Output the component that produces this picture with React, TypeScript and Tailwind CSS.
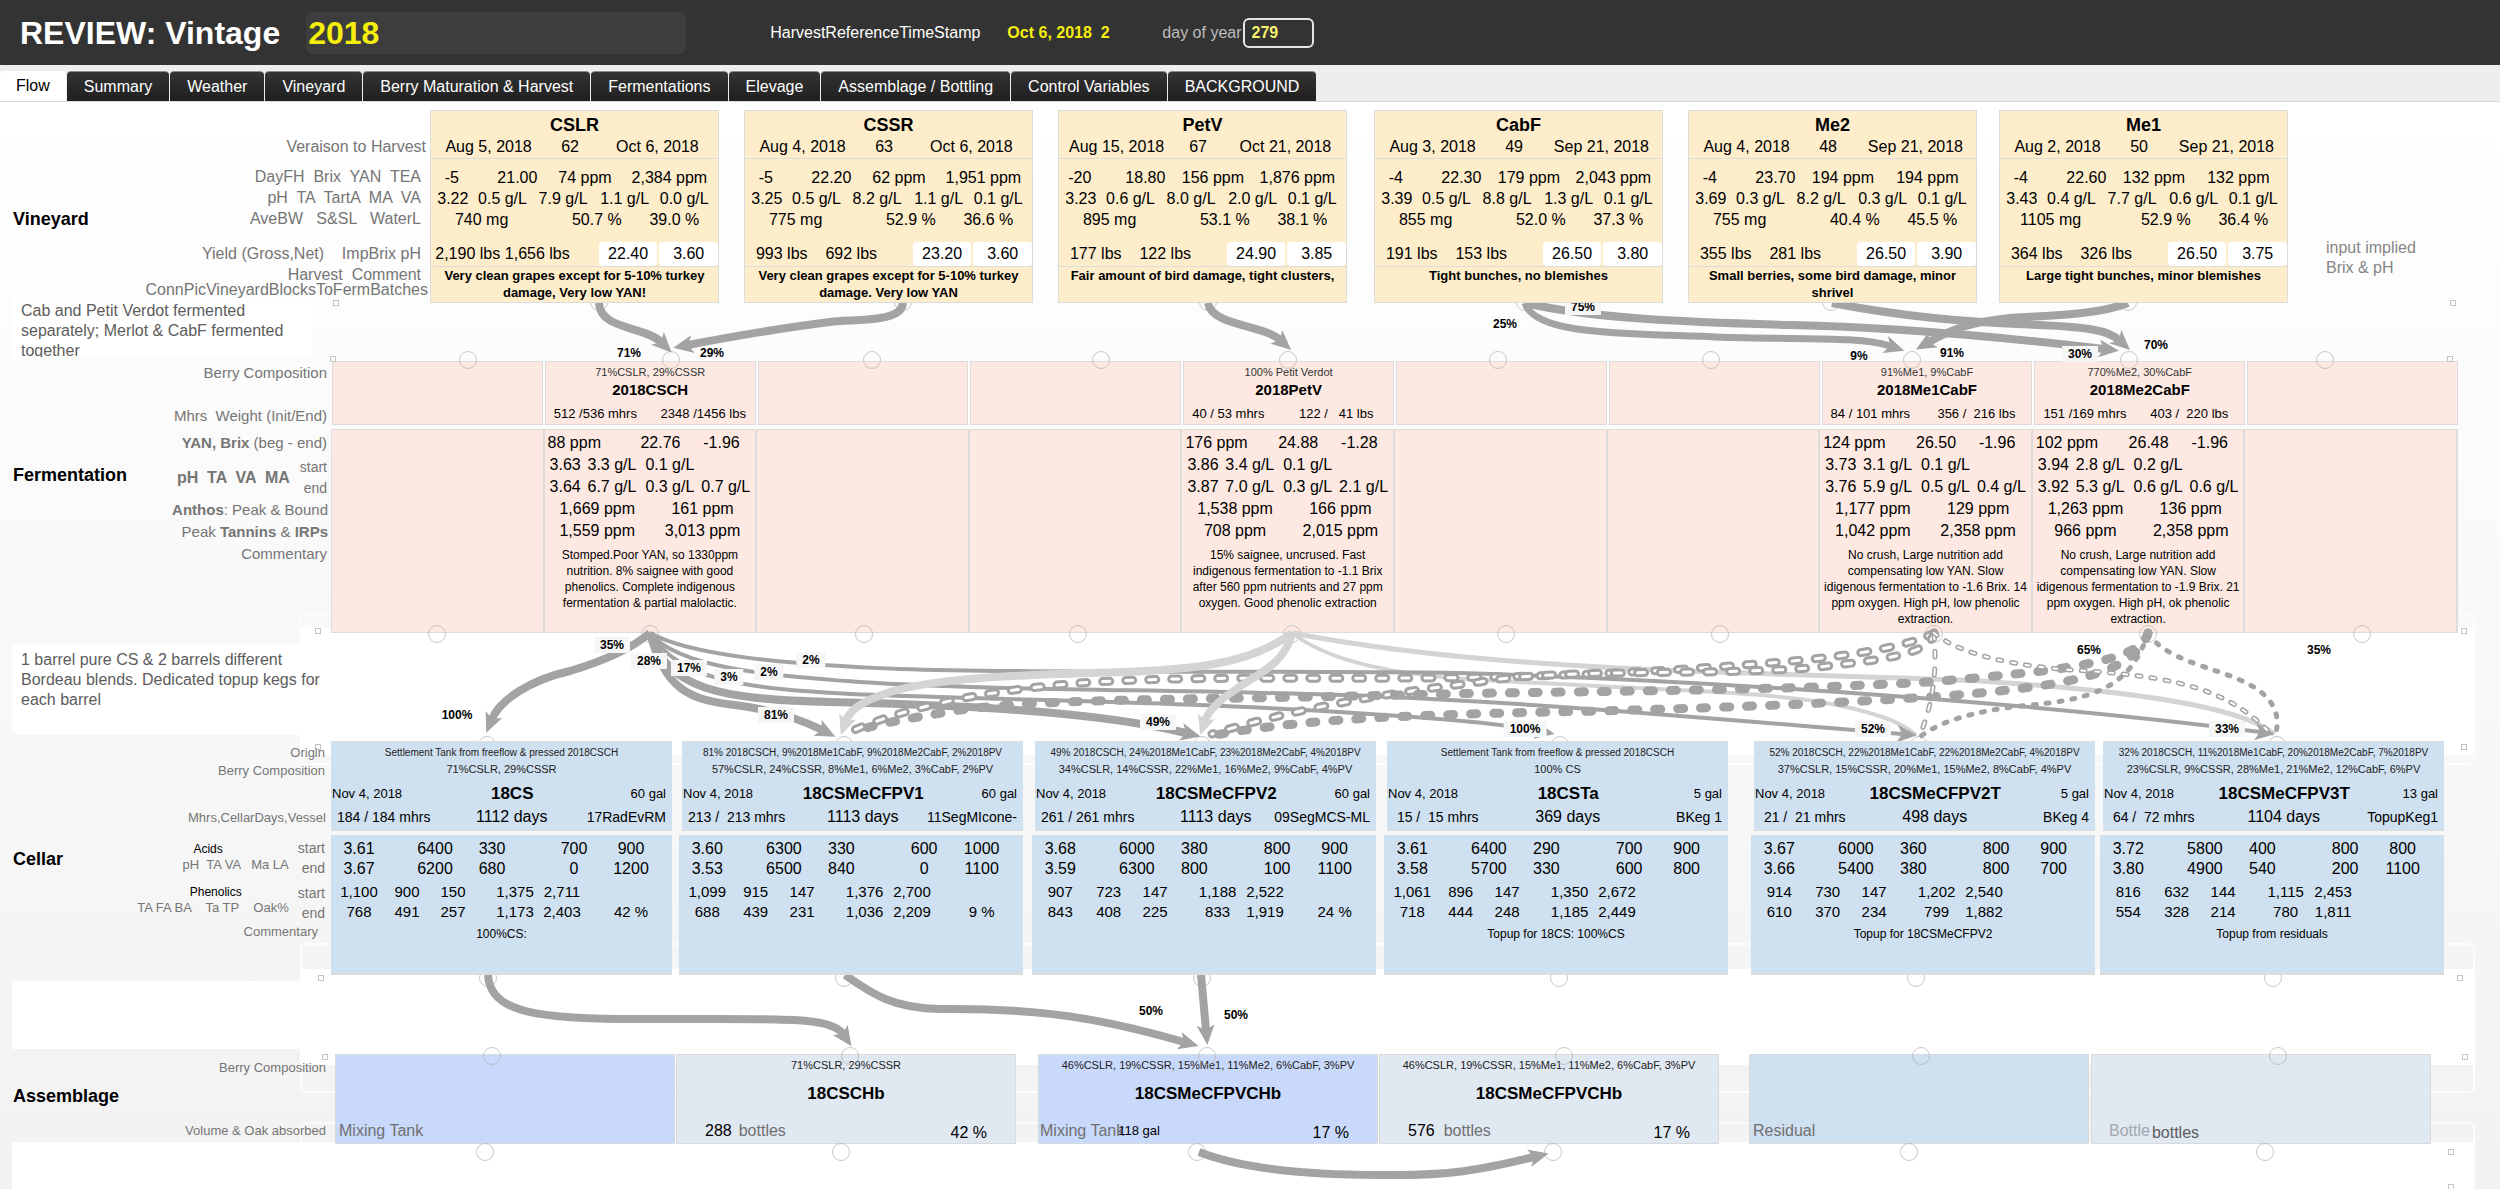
import { useState } from 'react';
import type { ReactNode } from 'react';

const tabs = [
  'Flow',
  'Summary',
  'Weather',
  'Vineyard',
  'Berry Maturation & Harvest',
  'Fermentations',
  'Elevage',
  'Assemblage / Bottling',
  'Control Variables',
  'BACKGROUND',
];

// every other grid column is a spacer
const STARTS = ['col-start-2', 'col-start-4', 'col-start-6', 'col-start-8', 'col-start-10', 'col-start-12'];

const blocks = [
  {
    name: 'CSLR',
    dates: ['Aug 5, 2018', '62', 'Oct 6, 2018'],
    sugar: ['-5', '21.00', '74 ppm', '2,384 ppm'],
    acids: ['3.22', '0.5 g/L', '7.9 g/L', '1.1 g/L', '0.0 g/L'],
    berry: ['740 mg', '50.7 %', '39.0 %'],
    yields: ['2,190 lbs', '1,656 lbs'],
    implied: ['22.40', '3.60'],
    comment: 'Very clean grapes except for 5-10% turkey damage, Very low YAN!',
  },
  {
    name: 'CSSR',
    dates: ['Aug 4, 2018', '63', 'Oct 6, 2018'],
    sugar: ['-5', '22.20', '62 ppm', '1,951 ppm'],
    acids: ['3.25', '0.5 g/L', '8.2 g/L', '1.1 g/L', '0.1 g/L'],
    berry: ['775 mg', '52.9 %', '36.6 %'],
    yields: ['993 lbs', '692 lbs'],
    implied: ['23.20', '3.60'],
    comment: 'Very clean grapes except for 5-10% turkey damage. Very low YAN',
  },
  {
    name: 'PetV',
    dates: ['Aug 15, 2018', '67', 'Oct 21, 2018'],
    sugar: ['-20', '18.80', '156 ppm', '1,876 ppm'],
    acids: ['3.23', '0.6 g/L', '8.0 g/L', '2.0 g/L', '0.1 g/L'],
    berry: ['895 mg', '53.1 %', '38.1 %'],
    yields: ['177 lbs', '122 lbs'],
    implied: ['24.90', '3.85'],
    comment: 'Fair amount of bird damage, tight clusters,',
  },
  {
    name: 'CabF',
    dates: ['Aug 3, 2018', '49', 'Sep 21, 2018'],
    sugar: ['-4', '22.30', '179 ppm', '2,043 ppm'],
    acids: ['3.39', '0.5 g/L', '8.8 g/L', '1.3 g/L', '0.1 g/L'],
    berry: ['855 mg', '52.0 %', '37.3 %'],
    yields: ['191 lbs', '153 lbs'],
    implied: ['26.50', '3.80'],
    comment: 'Tight bunches, no blemishes',
  },
  {
    name: 'Me2',
    dates: ['Aug 4, 2018', '48', 'Sep 21, 2018'],
    sugar: ['-4', '23.70', '194 ppm', '194 ppm'],
    acids: ['3.69', '0.3 g/L', '8.2 g/L', '0.3 g/L', '0.1 g/L'],
    berry: ['755 mg', '40.4 %', '45.5 %'],
    yields: ['355 lbs', '281 lbs'],
    implied: ['26.50', '3.90'],
    comment: 'Small berries, some bird damage, minor shrivel',
  },
  {
    name: 'Me1',
    dates: ['Aug 2, 2018', '50', 'Sep 21, 2018'],
    sugar: ['-4', '22.60', '132 ppm', '132 ppm'],
    acids: ['3.43', '0.4 g/L', '7.7 g/L', '0.6 g/L', '0.1 g/L'],
    berry: ['1105 mg', '52.9 %', '36.4 %'],
    yields: ['364 lbs', '326 lbs'],
    implied: ['26.50', '3.75'],
    comment: 'Large tight bunches, minor blemishes',
  },
];

type Batch = {
  origin: string;
  name: string;
  mhrs: string;
  weight: string;
  yan: string[];
  start: string[];
  end: string[];
  anthos: string[];
  tannins: string[];
  comment: string;
};

const csch: Batch = {
  origin: '71%CSLR, 29%CSSR',
  name: '2018CSCH',
  mhrs: '512 /536 mhrs',
  weight: '2348 /1456 lbs',
  yan: ['88 ppm', '22.76', '-1.96'],
  start: ['3.63', '3.3 g/L', '0.1 g/L'],
  end: ['3.64', '6.7 g/L', '0.3 g/L', '0.7 g/L'],
  anthos: ['1,669 ppm', '161 ppm'],
  tannins: ['1,559 ppm', '3,013 ppm'],
  comment: 'Stomped.Poor YAN, so 1330ppm nutrition. 8% saignee with good phenolics. Complete indigenous fermentation & partial malolactic.',
};
const petv: Batch = {
  origin: '100% Petit Verdot',
  name: '2018PetV',
  mhrs: '40 / 53 mhrs',
  weight: '122 /   41 lbs',
  yan: ['176 ppm', '24.88', '-1.28'],
  start: ['3.86', '3.4 g/L', '0.1 g/L'],
  end: ['3.87', '7.0 g/L', '0.3 g/L', '2.1 g/L'],
  anthos: ['1,538 ppm', '166 ppm'],
  tannins: ['708 ppm', '2,015 ppm'],
  comment: '15% saignee, uncrused. Fast indigenous fermentation to -1.1 Brix after 560 ppm nutrients and 27 ppm oxygen. Good phenolic extraction',
};
const me1: Batch = {
  origin: '91%Me1, 9%CabF',
  name: '2018Me1CabF',
  mhrs: '84 / 101 mhrs',
  weight: '356 /  216 lbs',
  yan: ['124 ppm', '26.50', '-1.96'],
  start: ['3.73', '3.1 g/L', '0.1 g/L'],
  end: ['3.76', '5.9 g/L', '0.5 g/L', '0.4 g/L'],
  anthos: ['1,177 ppm', '129 ppm'],
  tannins: ['1,042 ppm', '2,358 ppm'],
  comment: 'No crush, Large nutrition add compensating low YAN. Slow idigenous fermentation to -1.6 Brix. 14 ppm oxygen. High pH, low phenolic extraction.',
};
const me2: Batch = {
  origin: '770%Me2, 30%CabF',
  name: '2018Me2CabF',
  mhrs: '151 /169 mhrs',
  weight: '403 /  220 lbs',
  yan: ['102 ppm', '26.48', '-1.96'],
  start: ['3.94', '2.8 g/L', '0.2 g/L'],
  end: ['3.92', '5.3 g/L', '0.6 g/L', '0.6 g/L'],
  anthos: ['1,263 ppm', '136 ppm'],
  tannins: ['966 ppm', '2,358 ppm'],
  comment: 'No crush, Large nutrition add compensating low YAN. Slow idigenous fermentation to -1.9 Brix. 21 ppm oxygen. High pH, ok phenolic extraction.',
};
const batches: (Batch | null)[] = [null, csch, null, null, petv, null, null, me1, me2, null];

const vessels = [
  {
    origin: 'Settlement Tank from freeflow & pressed 2018CSCH',
    berries: '71%CSLR, 29%CSSR',
    date: 'Nov 4, 2018',
    name: '18CS',
    volume: '60 gal',
    mhrs: '184 / 184 mhrs',
    days: '1112 days',
    vessel: '17RadEvRM',
    acidStart: ['3.61', '6400', '330', '700', '900'],
    acidEnd: ['3.67', '6200', '680', '0', '1200'],
    phenStart: ['1,100', '900', '150', '1,375', '2,711'],
    phenEnd: ['768', '491', '257', '1,173', '2,403', '42 %'],
    comment: '100%CS:',
  },
  {
    origin: '81% 2018CSCH, 9%2018Me1CabF, 9%2018Me2CabF, 2%2018PV',
    berries: '57%CSLR, 24%CSSR, 8%Me1, 6%Me2, 3%CabF, 2%PV',
    date: 'Nov 4, 2018',
    name: '18CSMeCFPV1',
    volume: '60 gal',
    mhrs: '213 /  213 mhrs',
    days: '1113 days',
    vessel: '11SegMIcone-',
    acidStart: ['3.60', '6300', '330', '600', '1000'],
    acidEnd: ['3.53', '6500', '840', '0', '1100'],
    phenStart: ['1,099', '915', '147', '1,376', '2,700'],
    phenEnd: ['688', '439', '231', '1,036', '2,209', '9 %'],
    comment: '',
  },
  {
    origin: '49% 2018CSCH, 24%2018Me1CabF, 23%2018Me2CabF, 4%2018PV',
    berries: '34%CSLR, 14%CSSR, 22%Me1, 16%Me2, 9%CabF, 4%PV',
    date: 'Nov 4, 2018',
    name: '18CSMeCFPV2',
    volume: '60 gal',
    mhrs: '261 / 261 mhrs',
    days: '1113 days',
    vessel: '09SegMCS-ML',
    acidStart: ['3.68', '6000', '380', '800', '900'],
    acidEnd: ['3.59', '6300', '800', '100', '1100'],
    phenStart: ['907', '723', '147', '1,188', '2,522'],
    phenEnd: ['843', '408', '225', '833', '1,919', '24 %'],
    comment: '',
  },
  {
    origin: 'Settlement Tank from freeflow & pressed 2018CSCH',
    berries: '100% CS',
    date: 'Nov 4, 2018',
    name: '18CSTa',
    volume: '5 gal',
    mhrs: ' 15 /  15 mhrs',
    days: '369 days',
    vessel: 'BKeg 1',
    acidStart: ['3.61', '6400', '290', '700', '900'],
    acidEnd: ['3.58', '5700', '330', '600', '800'],
    phenStart: ['1,061', '896', '147', '1,350', '2,672'],
    phenEnd: ['718', '444', '248', '1,185', '2,449'],
    comment: 'Topup for 18CS: 100%CS',
  },
  {
    origin: '52% 2018CSCH, 22%2018Me1CabF, 22%2018Me2CabF, 4%2018PV',
    berries: '37%CSLR, 15%CSSR, 20%Me1, 15%Me2, 8%CabF, 4%PV',
    date: 'Nov 4, 2018',
    name: '18CSMeCFPV2T',
    volume: '5 gal',
    mhrs: ' 21 /  21 mhrs',
    days: '498 days',
    vessel: 'BKeg 4',
    acidStart: ['3.67', '6000', '360', '800', '900'],
    acidEnd: ['3.66', '5400', '380', '800', '700'],
    phenStart: ['914', '730', '147', '1,202', '2,540'],
    phenEnd: ['610', '370', '234', '799', '1,882'],
    comment: 'Topup for 18CSMeCFPV2',
  },
  {
    origin: '32% 2018CSCH, 11%2018Me1CabF, 20%2018Me2CabF, 7%2018PV',
    berries: '23%CSLR, 9%CSSR, 28%Me1, 21%Me2, 12%CabF, 6%PV',
    date: 'Nov 4, 2018',
    name: '18CSMeCFPV3T',
    volume: '13 gal',
    mhrs: ' 64 /  72 mhrs',
    days: '1104 days',
    vessel: 'TopupKeg1',
    acidStart: ['3.72', '5800', '400', '800', '800'],
    acidEnd: ['3.80', '4900', '540', '200', '1100'],
    phenStart: ['816', '632', '144', '1,115', '2,453'],
    phenEnd: ['554', '328', '214', '780', '1,811'],
    comment: 'Topup from residuals',
  },
];

type Line = { d: string; w: number; light?: boolean; dash?: 'solid' | 'hollow' | 'smallSolid' | 'smallHollow' | 'thinHollow'; head?: boolean };
type Tag = { x: number; y: number; text: string; fill?: boolean };

const vineyardLines: Line[] = [
  { d: 'M599 303 C600 330 645 326 661 342', w: 8, head: true },
  { d: 'M903 303 C902 322 860 319 830 322 C790 327 740 335 688 345', w: 8, head: true },
  { d: 'M1208 303 C1212 326 1262 324 1280 340', w: 8, head: true },
  { d: 'M1525 303 C1535 335 1620 333 1715 337 C1800 340 1860 336 1890 346', w: 7, head: true },
  { d: 'M1525 303 C1590 318 1680 322 1790 325 C1900 327 2010 338 2104 349', w: 8, head: true },
  { d: 'M1832 303 C1900 316 1960 322 2040 325 C2085 327 2108 330 2119 340', w: 8, head: true },
  { d: 'M2128 303 C2100 314 2060 315 2010 318 C1970 322 1950 330 1929 342', w: 8, head: true },
];
const vineyardTags: Tag[] = [
  { x: 629, y: 353, text: '71%' },
  { x: 712, y: 353, text: '29%' },
  { x: 1505, y: 324, text: '25%' },
  { x: 1583, y: 307, text: '75%', fill: true },
  { x: 1859, y: 356, text: '9%' },
  { x: 1952, y: 353, text: '91%' },
  { x: 2080, y: 354, text: '30%', fill: true },
  { x: 2156, y: 345, text: '70%' },
];

const fermentLines: Line[] = [
  { d: 'M1292 633 C1370 648 1470 660 1600 667 C1750 675 1880 676 1980 681 C2120 690 2240 705 2274 734', w: 5, light: true },
  { d: 'M1292 633 C1330 662 1390 672 1450 678 C1600 688 1750 690 1820 702 C1880 712 1905 725 1916 735', w: 4, light: true },
  { d: 'M650 633 C690 655 780 664 900 669 C1050 674 1280 670 1460 673 C1750 682 2050 705 2260 732', w: 4, head: true },
  { d: 'M650 633 C680 670 780 676 860 682 C1000 691 1180 689 1370 696 C1560 704 1750 722 1902 734', w: 4, head: true },
  { d: 'M650 633 C680 680 740 688 850 694 C1000 700 1200 702 1370 714 C1450 719 1510 725 1540 731', w: 4, head: true },
  { d: 'M650 633 C668 690 720 699 830 702 C950 705 1090 710 1186 733', w: 8, head: true },
  { d: 'M650 633 C665 690 690 700 735 705 C775 710 800 719 822 730', w: 8, head: true },
  { d: 'M650 633 C630 650 600 662 570 671 C530 680 500 700 492 719', w: 8, head: true },
  { d: 'M1934 633 C1900 650 1830 658 1770 663 C1650 672 1560 677 1420 678 C1300 679 1180 676 1080 683 C970 692 900 710 852 731', w: 9, dash: 'hollow' },
  { d: 'M1934 633 C1930 655 1880 660 1810 668 C1700 676 1560 668 1480 682 C1380 694 1290 710 1212 734', w: 9, dash: 'hollow' },
  { d: 'M2148 633 C2140 665 2040 672 1930 682 C1750 692 1550 691 1400 695 C1200 700 1050 698 960 710 C900 720 870 725 852 733', w: 9, dash: 'solid' },
  { d: 'M2148 633 C2135 675 2060 685 1980 693 C1850 704 1700 708 1600 711 C1450 714 1320 716 1215 735', w: 9, dash: 'solid' },
  { d: 'M1934 633 C1937 670 1934 700 1920 735', w: 5, dash: 'thinHollow' },
  { d: 'M1934 633 C1960 655 2020 668 2090 671 C2180 678 2230 690 2272 735', w: 5, dash: 'smallHollow' },
  { d: 'M2148 633 C2130 690 2090 700 2020 706 C1970 712 1940 722 1921 736', w: 5, dash: 'smallSolid' },
  { d: 'M2148 633 C2165 660 2215 668 2240 680 C2275 695 2280 715 2276 733', w: 5, dash: 'smallSolid' },
  { d: 'M1292 633 C1250 665 1190 671 1090 673 C990 676 930 680 890 692 C860 702 850 710 846 721', w: 8, light: true, head: true },
  { d: 'M1292 633 C1285 665 1255 675 1235 690 C1215 703 1208 712 1205 721', w: 8, light: true, head: true },
];
const fermentTags: Tag[] = [
  { x: 612, y: 645, text: '35%', fill: true },
  { x: 649, y: 661, text: '28%', fill: true },
  { x: 689, y: 668, text: '17%', fill: true },
  { x: 729, y: 677, text: '3%', fill: true },
  { x: 769, y: 672, text: '2%', fill: true },
  { x: 811, y: 660, text: '2%', fill: true },
  { x: 776, y: 715, text: '81%', fill: true },
  { x: 1158, y: 722, text: '49%', fill: true },
  { x: 457, y: 715, text: '100%' },
  { x: 1525, y: 729, text: '100%', fill: true },
  { x: 1873, y: 729, text: '52%', fill: true },
  { x: 2227, y: 729, text: '33%', fill: true },
  { x: 2089, y: 650, text: '65%' },
  { x: 2319, y: 650, text: '35%' },
];

const cellarLines: Line[] = [
  { d: 'M488 975 C490 1010 530 1018 620 1019 L700 1019 C790 1019 832 1018 843 1034', w: 8, head: true },
  { d: 'M845 975 C870 992 890 1008 940 1009 C1040 1008 1100 1018 1184 1042', w: 8, head: true },
  { d: 'M1201 975 L1206 1030', w: 8, head: true },
];
const cellarTags: Tag[] = [
  { x: 1151, y: 1011, text: '50%' },
  { x: 1236, y: 1015, text: '50%' },
];

const bottleLines: Line[] = [{ d: 'M1199 1152 C1240 1168 1300 1175 1380 1175 C1450 1176 1480 1170 1534 1157', w: 8, head: true }];

const dashes = {
  solid: '6 17',
  hollow: '7 16',
  smallSolid: '3 10',
  smallHollow: '4 10',
  thinHollow: '6 12',
};

function Row({ cols, cells, className = '' }: { cols: string; cells: string[]; className?: string }) {
  return (
    <div className={`grid ${cols} ${className}`}>
      {cells.map((cell, i) => (
        <span key={i} className={`${STARTS[i]} flex min-w-0 items-center justify-center whitespace-nowrap`}>
          {cell}
        </span>
      ))}
    </div>
  );
}

function Label({ children, className = '' }: { children: ReactNode; className?: string }) {
  return <div className={`flex items-center justify-end whitespace-pre ${className}`}>{children}</div>;
}

function SectionLabels({ name, nameClass, children, className = '' }: { name: string; nameClass: string; children: ReactNode; className?: string }) {
  return (
    <div className={`flex min-w-0 justify-between pl-[13px] text-[#757575] ${className}`}>
      <h2 className={`text-[18px] leading-5 font-bold text-black ${nameClass}`}>{name}</h2>
      <div>{children}</div>
    </div>
  );
}

function Connectors({
  top,
  height,
  lines,
  tags = [],
  circles,
  squares,
}: {
  top: number;
  height: number;
  lines: Line[];
  tags?: Tag[];
  circles: number[][];
  squares: number[][];
}) {
  return (
    <>
      <svg
        className="pointer-events-none absolute inset-0 h-full w-full overflow-visible"
        viewBox={`0 ${top} 2500 ${height}`}
        preserveAspectRatio="none"
        fill="none"
        aria-hidden="true"
      >
        <defs>
          <marker id={`head-${top}`} markerUnits="userSpaceOnUse" markerWidth="24" markerHeight="24" refX="5" refY="12" orient="auto">
            <path d="M0 3 L20 12 L0 21 L5 12 Z" fill="#a3a3a3" />
          </marker>
          <marker id={`headlight-${top}`} markerUnits="userSpaceOnUse" markerWidth="24" markerHeight="24" refX="5" refY="12" orient="auto">
            <path d="M0 3 L20 12 L0 21 L5 12 Z" fill="#d4d4d4" />
          </marker>
        </defs>
        {circles.map(([x, y]) => (
          <circle key={`${x}-${y}`} cx={x} cy={y} r="8.5" stroke="#b4b0b0" strokeOpacity="0.7" />
        ))}
        {squares.map(([x, y]) => (
          <rect key={`${x}-${y}`} x={x - 2.5} y={y - 2.5} width="5" height="5" stroke="#c4c4c4" />
        ))}
        {lines.map((line) => (
          <g key={line.d} strokeLinecap={line.dash ? 'round' : 'butt'}>
            <path
              d={line.d}
              stroke={line.light ? '#d4d4d4' : '#a3a3a3'}
              strokeWidth={line.w}
              strokeDasharray={line.dash ? dashes[line.dash] : undefined}
              markerEnd={line.head ? `url(#${line.light ? 'headlight' : 'head'}-${top})` : undefined}
            />
            {(line.dash === 'hollow' || line.dash === 'smallHollow' || line.dash === 'thinHollow') && (
              <path d={line.d} stroke="#fff" strokeWidth={line.dash === 'hollow' ? 3 : 2} strokeDasharray={dashes[line.dash]} />
            )}
          </g>
        ))}
      </svg>
      {tags.map((tag) => (
        <span
          key={`${tag.x}-${tag.y}`}
          className={`absolute -translate-x-1/2 -translate-y-1/2 px-1.5 text-[12px] leading-4 font-bold text-black ${tag.fill ? 'bg-[#f6f6f6]' : ''}`}
          style={{ left: `${tag.x / 25}%`, top: tag.y - top }}
        >
          {tag.text}
        </span>
      ))}
    </>
  );
}

function BlockCard({ block, start }: { block: (typeof blocks)[number]; start: string }) {
  return (
    <article className={`${start} min-w-0 border border-[#dcdcdc] bg-[#feedcb] text-[16px] text-black`}>
      <div className="border-b border-[#dcdcdc] pt-1 pb-1.5">
        <h3 className="text-center text-[18px] leading-5 font-bold">{block.name}</h3>
        <Row cols="grid-cols-[10fr_96fr_24fr_20fr_30fr_96fr_13fr]" className="h-[17px]" cells={block.dates} />
      </div>
      <div className="border-b border-[#dcdcdc] pt-[7px]">
        <Row cols="grid-cols-[6fr_30fr_29fr_44fr_15fr_62fr_16fr_76fr_11fr]" className="h-[21px]" cells={block.sugar} />
        <Row cols="grid-cols-[6fr_32fr_9fr_50fr_11fr_50fr_12fr_50fr_10fr_50fr_9fr]" className="h-[21px]" cells={block.acids} />
        <Row cols="grid-cols-[20fr_62fr_60fr_50fr_28fr_50fr_19fr]" className="h-[21px]" cells={block.berry} />
        <div className="mt-[13px] grid h-6 grid-cols-[5fr_64fr_6fr_64fr_30fr_59fr_2fr_59fr]">
          {block.yields.map((y, i) => (
            <span key={i} className={`${STARTS[i]} flex min-w-0 items-center justify-center whitespace-nowrap`}>
              {y}
            </span>
          ))}
          {block.implied.map((v, i) => (
            <input
              key={i}
              aria-label={`${block.name} implied ${i === 0 ? 'Brix' : 'pH'}`}
              defaultValue={v}
              className={`${STARTS[i + 2]} w-full min-w-0 rounded-sm bg-white text-center outline-none`}
            />
          ))}
        </div>
      </div>
      <p className="h-[35px] px-1 text-center text-[13px] leading-[17px] font-bold">{block.comment}</p>
    </article>
  );
}

function BatchBody({ batch }: { batch: Batch }) {
  return (
    <>
      <div className="grid h-[22px] grid-cols-[93fr_63fr_52fr] items-center pl-[3px]">
        {batch.yan.map((v, i) => (
          <span key={i}>{v}</span>
        ))}
      </div>
      {[batch.start, batch.end].map((values, n) => (
        <div key={n} className="grid h-[22px] grid-cols-[38fr_58fr_56fr_54fr] items-center pl-[5px] whitespace-nowrap">
          {values.map((v, i) => (
            <span key={i} className="min-w-0">
              {v}
            </span>
          ))}
        </div>
      ))}
      {[batch.anthos, batch.tannins].map((values, n) => (
        <div key={n} className="grid h-[22px] grid-cols-2 items-center text-center">
          {values.map((v, i) => (
            <span key={i}>{v}</span>
          ))}
        </div>
      ))}
      <p className="mt-1.5 px-0.5 text-center text-[12px] leading-4">{batch.comment}</p>
    </>
  );
}

const acidCols = 'grid-cols-[8fr_40fr_36fr_40fr_17fr_40fr_42fr_40fr_17fr_40fr_21fr]';
const phenCols = 'grid-cols-[6fr_44fr_4fr_44fr_2fr_44fr_18fr_44fr_3fr_44fr_25fr_44fr_19fr]';

function VesselCard({ vessel, start, first }: { vessel: (typeof vessels)[number]; start: string; first: boolean }) {
  return (
    <article className={`${start} min-w-0 text-black`}>
      <div className="h-[90px] border-y border-[#dcdcdc] bg-[#cfe0f0] pt-[3px]">
        <p className="text-center text-[10px] leading-4 whitespace-nowrap text-[#222]">{vessel.origin}</p>
        <p className="text-center text-[11px] leading-4 whitespace-nowrap text-[#222]">{vessel.berries}</p>
        <div className="mt-1 grid h-[22px] grid-cols-[110fr_148fr_83fr] items-center pr-1.5 pl-px text-[13px] whitespace-nowrap">
          <span>{vessel.date}</span>
          <h3 className="text-center text-[17px] font-bold">{vessel.name}</h3>
          <span className="text-right">{vessel.volume}</span>
        </div>
        <div className="mt-0.5 grid h-[22px] grid-cols-[110fr_148fr_83fr] items-center pr-1.5 text-[14px] whitespace-pre">
          <span className="min-w-0 pl-1.5">{vessel.mhrs}</span>
          <span className="min-w-0 text-center text-[16px]">{vessel.days}</span>
          <span className="flex min-w-0 justify-end">{vessel.vessel}</span>
        </div>
      </div>
      <div className={`mt-1 h-[140px] border-b-2 border-[#dcdcdc] bg-[#cfe0f0] pt-0.5 text-[16px] ${first ? '' : '-ml-[3px]'}`}>
        <Row cols={acidCols} className="h-5" cells={vessel.acidStart} />
        <Row cols={acidCols} className="h-5" cells={vessel.acidEnd} />
        <Row cols={phenCols} className="mt-1 h-5 text-[15px]" cells={vessel.phenStart} />
        <Row cols={phenCols} className="h-5 text-[15px]" cells={vessel.phenEnd} />
        <p className="mt-[5px] text-center text-[12px] leading-4">{vessel.comment}</p>
      </div>
    </article>
  );
}

function LotCard({
  start,
  tone,
  berries = '',
  name = '',
  children,
  oak,
}: {
  start: string;
  tone: string;
  berries?: string;
  name?: string;
  children: ReactNode;
  oak?: string;
}) {
  return (
    <article className={`${start} ${tone} h-[90px] min-w-0 border border-[#d8dade] pt-0.5 text-[16px]`}>
      <p className="h-4 text-center text-[11px] leading-4 whitespace-nowrap text-[#222]">{berries}</p>
      <h3 className="mt-[11px] h-5 text-center text-[17px] leading-5 font-bold text-black">{name}</h3>
      <div className="mt-[17px] flex h-5 items-center whitespace-nowrap text-[#707070]">
        {children}
        {oak && <span className="ml-auto pt-1 pr-7 text-black">{oak}</span>}
      </div>
    </article>
  );
}

export default function App() {
  const [active, setActive] = useState('Flow');

  return (
    <div className="isolate flex min-h-screen flex-col overflow-hidden bg-linear-to-b from-white from-10% to-[#f2f2f2] font-['Liberation_Sans',Arial,sans-serif]">
      {/* Header */}
      <header className="flex h-[65px] shrink-0 items-center bg-[#333333] pl-5 text-[16px] text-white">
        <h1>
          <label htmlFor="vintage" className="text-[32px] font-bold whitespace-nowrap">
            REVIEW: Vintage
          </label>
        </h1>
        <input
          id="vintage"
          defaultValue="2018"
          className="ml-[26px] h-[42px] w-[380px] rounded-md bg-[#3d3d3d] pl-0.5 text-[32px] font-bold text-[#f5ee0b] outline-none"
        />
        <label htmlFor="stamp" className="ml-[84px]">
          HarvestReferenceTimeStamp
        </label>
        <input id="stamp" defaultValue="Oct 6, 2018  2" className="ml-[27px] w-[130px] bg-transparent font-bold text-[#f5ee0b] outline-none" />
        <label htmlFor="doy" className="ml-[25px] text-[#bdbdbd]">
          day of year
        </label>
        <input
          id="doy"
          defaultValue="279"
          className="ml-px h-[30px] w-[71px] rounded-md border-2 border-[#e5e5e5] bg-transparent pl-[7px] font-bold text-[#f5f06a] outline-none"
        />
      </header>

      {/* Tabs */}
      <nav role="tablist" className="flex h-[37px] shrink-0 gap-px border-b border-[#d9d9d9] bg-[#eeeeee] pt-1.5 text-[16px]">
        {tabs.map((tab) => (
          <button
            key={tab}
            type="button"
            role="tab"
            aria-selected={tab === active}
            onClick={() => setActive(tab)}
            className={
              tab === active
                ? 'rounded-t-sm bg-white px-4 text-black'
                : 'rounded-t-sm border-t border-[#8a8a8a] bg-linear-to-b from-[#333] to-[#202020] px-[17px] text-white'
            }
          >
            {tab}
          </button>
        ))}
      </nav>

      {/* Vineyard */}
      <section className="relative z-10 grid grid-cols-[430fr_289fr_25fr_289fr_25fr_289fr_27fr_289fr_25fr_289fr_22fr_289fr_212fr] pt-2">
        <SectionLabels name="Vineyard" nameClass="pt-[99px]" className="text-[16px]">
          <Label className="mt-[26px] h-[21px] pr-1">Veraison to Harvest</Label>
          <Label className="mt-[9px] h-[21px] pr-[9px]">DayFH  Brix  YAN  TEA</Label>
          <Label className="h-[21px] pr-[9px]">pH  TA  TartA  MA  VA</Label>
          <Label className="h-[21px] pr-[9px]">AveBW   S&SL   WaterL</Label>
          <Label className="mt-[13px] h-6 pr-[9px]">Yield (Gross,Net)    ImpBrix pH</Label>
          <Label className="h-[18px] pr-[9px]">Harvest  Comment</Label>
          <Label className="h-3 pr-0.5">ConnPicVineyardBlocksToFermBatches</Label>
        </SectionLabels>
        {blocks.map((block, i) => (
          <BlockCard key={block.name} block={block} start={STARTS[i]} />
        ))}
        <p className="pt-[128px] pl-[38px] text-[16px] leading-5 text-[#858585]">
          input implied
          <br />
          Brix & pH
        </p>
      </section>

      <section className="relative flex h-[58px] shrink-0">
        <textarea
          aria-label="Fermentation plan"
          defaultValue="Cab and Petit Verdot fermented separately; Merlot & CabF fermented together"
          className="-mt-1.5 ml-3 block h-[60px] w-[12%] resize-none overflow-hidden bg-white pt-1 pl-[9px] text-[16px] leading-5 text-[#5c5c5c] outline-none"
        />
        <Connectors
          top={303}
          height={58}
          lines={vineyardLines}
          tags={vineyardTags}
          circles={[
            [599, 302], [903, 302], [1208, 302], [1525, 302], [1831, 302], [2128, 302],
            [468, 360], [671, 360], [872, 360], [1101, 360], [1288, 360], [1498, 360], [1711, 360], [1912, 360], [2129, 360], [2325, 360],
          ]}
          squares={[[336, 303], [333, 359], [2453, 303], [2450, 359]]}
        />
      </section>

      {/* Fermentation */}
      <section className="grid grid-cols-[331fr_2127fr_42fr]">
        <SectionLabels name="Fermentation" nameClass="pt-[104px]" className="text-[15px]">
          <Label className="h-6 pr-1">Berry Composition</Label>
          <Label className="mt-[21px] h-5 pr-1">Mhrs  Weight (Init/End)</Label>
          <Label className="mt-1.5 h-[22px] pr-1">
            <b>YAN, Brix</b> (beg - end)
          </Label>
          <Label className="mt-[3px] pr-1">
            <b className="mr-2.5 text-[16px]">pH  TA  VA  MA</b>
            <span className="text-right text-[14px] leading-[21px]">
              start
              <br />
              end
            </span>
          </Label>
          <Label className="h-[22px] pr-[3px]">
            <b>Anthos</b>: Peak & Bound
          </Label>
          <Label className="h-[22px] pr-[3px]">
            Peak <b>Tannins</b> & <b>IRPs</b>
          </Label>
          <Label className="h-[22px] pr-1">Commentary</Label>
        </SectionLabels>
        <div className="min-w-0 text-black">
          <div className="grid grid-cols-10 gap-0.5 pl-px">
            {batches.map((batch, i) => (
              <div key={i} className="h-16 min-w-0 border border-[#dcdcdc] bg-[#fde9e2] pt-0.5">
                {batch && (
                  <>
                    <p className="text-center text-[11px] leading-4 text-[#333]">{batch.origin}</p>
                    <h3 className="text-center text-[15px] leading-5 font-bold">{batch.name}</h3>
                    <div className="mt-1 grid h-5 grid-cols-[108fr_95fr] items-center pl-2 text-[13px] whitespace-pre">
                      <span>{batch.mhrs}</span>
                      <span>{batch.weight}</span>
                    </div>
                  </>
                )}
              </div>
            ))}
          </div>
          <div className="mt-1 grid h-[204px] grid-cols-10 border-y border-l border-[#dcdcdc] bg-[#fde9e2] text-[16px]">
            {batches.map((batch, i) => (
              <div key={i} className="min-w-0 border-r-2 border-[#dcdcdc] pt-px">
                {batch && <BatchBody batch={batch} />}
              </div>
            ))}
          </div>
        </div>
      </section>

      <section className="relative flex h-[108px] shrink-0">
        <div className="absolute -top-5 right-[1%] left-[12%] -z-20 h-[152px] rounded-md border-2 border-white/70" />
        <div className="absolute -top-1.5 right-[1%] left-[12%] -z-10 h-[128px] bg-white" />
        <textarea
          aria-label="Cellar plan"
          defaultValue="1 barrel pure CS & 2 barrels different Bordeau blends. Dedicated topup kegs for each barrel"
          className="mt-[11px] ml-3 block h-[91px] w-[314px] resize-none overflow-hidden rounded-md bg-white pt-1.5 pl-[9px] text-[16px] leading-5 text-[#5c5c5c] outline-none"
        />
        <Connectors
          top={633}
          height={108}
          lines={fermentLines}
          tags={fermentTags}
          circles={[
            [437, 634], [650, 634], [864, 634], [1078, 634], [1292, 634], [1506, 634], [1720, 634], [1934, 634], [2148, 634], [2362, 634],
            [487, 745], [844, 745], [1202, 745], [1560, 745], [1919, 745], [2277, 745],
          ]}
          squares={[[318, 631], [318, 747], [2464, 631], [2464, 747]]}
        />
      </section>

      {/* Cellar */}
      <section className="relative z-10 grid grid-cols-[331fr_341fr_10fr_341fr_12fr_341fr_11fr_341fr_26fr_341fr_8fr_341fr_56fr]">
        <SectionLabels name="Cellar" nameClass="pt-[108px]" className="text-[13px]">
          <Label className="mt-[3px] h-[18px] pr-1.5">Origin</Label>
          <Label className="h-[18px] pr-1.5">Berry Composition</Label>
          <Label className="mt-[29px] h-[18px] pr-[5px]">Mhrs,CellarDays,Vessel</Label>
          <div className="mt-[11px] flex h-10 justify-end gap-[9px] pr-1.5 whitespace-pre">
            <div className="pt-1 text-right leading-[15px]">
              <div className="pr-[66px] text-[12px] text-black">Acids</div>
              pH  TA VA   Ma LA
            </div>
            <div className="text-right text-[14px] leading-5">
              start
              <br />
              end
            </div>
          </div>
          <div className="mt-[5px] flex h-10 justify-end gap-[9px] pr-1.5 whitespace-pre">
            <div className="pt-0.5 text-right leading-[15px]">
              <div className="pr-[47px] text-[12px] text-black">Phenolics</div>
              TA FA BA    Ta TP    Oak%
            </div>
            <div className="text-right text-[14px] leading-5">
              start
              <br />
              end
            </div>
          </div>
          <Label className="h-[18px] pr-[13px]">Commentary</Label>
        </SectionLabels>
        {vessels.map((vessel, i) => (
          <VesselCard key={vessel.name} vessel={vessel} start={STARTS[i]} first={i === 0} />
        ))}
      </section>

      <section className="relative flex h-[79px] shrink-0">
        <div className="absolute -top-8 right-[1%] left-[12%] -z-20 h-[150px] rounded-md border-2 border-white/70" />
        <div className="absolute -top-1.5 right-[1%] left-[12%] -z-10 h-[96px] bg-white" />
        <textarea aria-label="Assemblage plan" className="mt-1.5 ml-3 block h-[68px] w-[314px] resize-none bg-white outline-none" />
        <Connectors
          top={975}
          height={79}
          lines={cellarLines}
          tags={cellarTags}
          circles={[
            [488, 978], [844, 978], [1202, 978], [1559, 978], [1916, 978], [2273, 978],
            [492, 1056], [850, 1056], [1207, 1056], [1564, 1056], [1921, 1056], [2278, 1056],
          ]}
          squares={[[321, 978], [325, 1057], [2460, 978], [2465, 1057]]}
        />
      </section>

      {/* Assemblage */}
      <section className="grid grid-cols-[335fr_340fr_1fr_340fr_22fr_340fr_1fr_340fr_30fr_340fr_2fr_340fr_69fr]">
        <SectionLabels name="Assemblage" nameClass="pt-8" className="text-[13px]">
          <Label className="mt-[5px] h-[18px] pr-[9px]">Berry Composition</Label>
          <Label className="mt-[45px] h-[18px] pr-[9px]">Volume & Oak absorbed</Label>
        </SectionLabels>
        <LotCard start="col-start-2" tone="bg-[#c9d9fc]">
          <span className="pl-[3px]">Mixing Tank</span>
        </LotCard>
        <LotCard start="col-start-4" tone="bg-[#e0e8f2]" berries="71%CSLR, 29%CSSR" name="18CSCHb" oak="42 %">
          <span className="pl-7 text-black">288</span>
          <span className="pl-[7px]">bottles</span>
        </LotCard>
        <LotCard
          start="col-start-6"
          tone="bg-[#c9d9fc]"
          berries="46%CSLR, 19%CSSR, 15%Me1, 11%Me2, 6%CabF, 3%PV"
          name="18CSMeCFPVCHb"
          oak="17 %"
        >
          <span className="pl-px">Mixing Tank</span>
          <span className="-ml-1.5 text-[13px] text-black">118 gal</span>
        </LotCard>
        <LotCard
          start="col-start-8"
          tone="bg-[#e0e8f2]"
          berries="46%CSLR, 19%CSSR, 15%Me1, 11%Me2, 6%CabF, 3%PV"
          name="18CSMeCFPVCHb"
          oak="17 %"
        >
          <span className="pl-7 text-black">576</span>
          <span className="pl-[9px]">bottles</span>
        </LotCard>
        <LotCard start="col-start-10" tone="bg-[#cfe0f0]">
          <span className="pl-[3px]">Residual</span>
        </LotCard>
        <LotCard start="col-start-12" tone="bg-[#e0e8f2]">
          <span className="pl-[17px] text-[#a3a7ad]">Bottle</span>
          <span className="pt-1 pl-0.5 text-[#5c5c5c]">bottles</span>
        </LotCard>
      </section>

      <section className="relative flex h-[45px] shrink-0">
        <div className="absolute -top-[22px] right-[1%] left-[12%] -z-20 h-[90px] rounded-md border-2 border-white/70" />
        <div className="absolute -top-0.5 right-[1%] left-[12%] -z-10 h-[60px] bg-white" />
        <textarea aria-label="Bottling plan" className="-mt-0.5 ml-3 block h-[60px] w-[314px] resize-none bg-white outline-none" />
        <Connectors
          top={1144}
          height={45}
          lines={bottleLines}
          circles={[[485, 1152], [841, 1152], [1197, 1152], [1553, 1152], [1909, 1152], [2265, 1152]]}
          squares={[[2451, 1152], [2451, 1187]]}
        />
      </section>
    </div>
  );
}
